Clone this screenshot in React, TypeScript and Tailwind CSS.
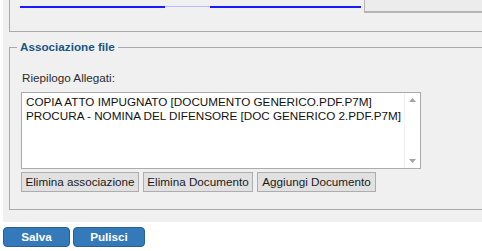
import React from 'react';

const allegati = [
  'COPIA ATTO IMPUGNATO [DOCUMENTO GENERICO.PDF.P7M]',
  'PROCURA - NOMINA DEL DIFENSORE [DOC GENERICO 2.PDF.P7M]',
];

const grayButton =
  'h-[20px] border border-[#adadad] bg-[#e1e1e1] text-[11.7px] leading-none text-[#1a1a1a] flex items-center justify-center';

const blueButton =
  'h-[20px] rounded-[4px] border border-[#2a5f94] bg-[#3479b9] text-[11.7px] font-bold leading-none text-white flex items-center justify-center';

const App: React.FC = () => {
  return (
    <div
      className="w-[482px] h-[251px] overflow-hidden bg-white"
      style={{ fontFamily: '"Liberation Sans", Arial, sans-serif' }}
    >
      <div className="ml-[3px] bg-[#f0f0f0] pb-[12px]">
        {/* previous section, cut off at the top */}
        <div className="ml-[6px] flex h-[32px] border-b border-l border-[#a9a9a9]">
          <div className="ml-[10px] mt-[6px] flex h-[2px] w-[341px]">
            <div className="h-[2px] w-[145px] bg-[#1a1aff]" />
            <div className="h-[1px] w-[45px] bg-[#b9b9ff]" />
            <div className="h-[2px] w-[151px] bg-[#1a1aff]" />
          </div>
          <div className="ml-[3px] h-[13px] flex-1 border-b-2 border-l border-[#b4b4b4] bg-[#ececec]" />
        </div>

        <fieldset className="ml-[6px] mt-[8px] border border-r-0 border-[#a9a9a9] pl-[11px] pb-[17px]">
          <legend className="-ml-[4px] px-[3px] text-[11.7px] font-bold leading-[14px] text-[#1b5584]">
            Associazione file
          </legend>

          <div className="mt-[17px] pl-px text-[11.7px] leading-[13px] text-[#2b2b2b]">Riepilogo Allegati:</div>

          <div className="mt-[8px] flex h-[77px] w-[400px] border border-[#ababab] bg-white">
            <div className="flex-1 pl-[4px] pt-[2px] text-[11.7px] leading-[13.5px] text-[#111]">
              {allegati.map(a => (
                <div key={a} className="whitespace-nowrap">{a}</div>
              ))}
            </div>
            <div className="flex w-[16px] flex-col items-center justify-between border-l border-[#f0f0f0] py-[5px]">
              <svg width="7" height="4" viewBox="0 0 7 4">
                <path d="M0 4 L3.5 0 L7 4 Z" fill="#a3a3a3" />
              </svg>
              <svg width="7" height="4" viewBox="0 0 7 4">
                <path d="M0 0 L3.5 4 L7 0 Z" fill="#a3a3a3" />
              </svg>
            </div>
          </div>

          <div className="mt-[3px] flex gap-[4px]">
            <button className={`${grayButton} w-[118px]`}>Elimina associazione</button>
            <button className={`${grayButton} w-[110px]`}>Elimina Documento</button>
            <button className={`${grayButton} w-[119px]`}>Aggiungi Documento</button>
          </div>
        </fieldset>
      </div>

      <div className="ml-[3px] mt-[5px] flex gap-[3px]">
        <button className={`${blueButton} w-[67px]`}>Salva</button>
        <button className={`${blueButton} w-[72px]`}>Pulisci</button>
      </div>
    </div>
  );
};

export default App;
